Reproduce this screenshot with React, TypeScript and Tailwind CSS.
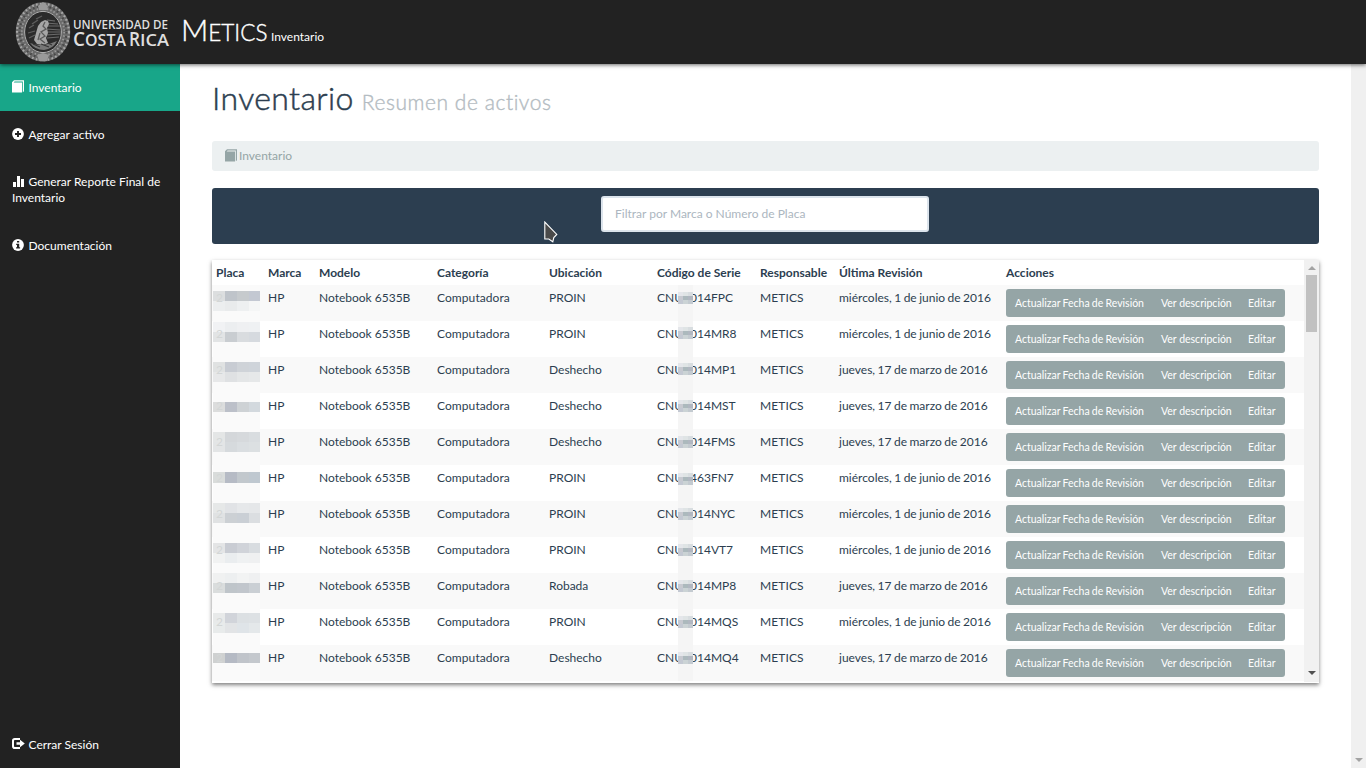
import type { ReactNode } from "react";

type Band = [number, number, string, string, string, string];

interface Asset {
  suffix: string;
  location: string;
  date: string;
  bands: Band[];
  my: number;
}

const JUNE = "miércoles, 1 de junio de 2016";
const MARCH = "jueves, 17 de marzo de 2016";

const assets: Asset[] = [
  { suffix: "014FPC", location: "PROIN", date: JUNE, my: 7, bands: [[6, 10, "#dcdedf", "#bfc4ca", "#c6cacd", "#c3c8d2"], [16, 10, "#eceeef", "#e9ebec", "#eef0f1", "#f5f6f6"]] },
  { suffix: "014MR8", location: "PROIN", date: JUNE, my: 6, bands: [[1, 10, "#f1f2f4", "#eceef0", "#eff0f2", "#eff1f3"], [11, 10, "#e2e4e5", "#c9cdd1", "#d9dcdf", "#d6dadf"]] },
  { suffix: "014MP1", location: "Deshecho", date: MARCH, my: 6, bands: [[5, 10, "#e0e2e2", "#c8ccd3", "#cfd3d8", "#cfd4da"], [15, 10, "#e7e8e9", "#dfe1e3", "#e4e6e7", "#e6e8e9"]] },
  { suffix: "014MST", location: "Deshecho", date: MARCH, my: 7, bands: [[9, 10, "#dcdddd", "#bcc0c9", "#ced2d5", "#d3d9de"]] },
  { suffix: "014FMS", location: "Deshecho", date: MARCH, my: 7, bands: [[3, 10, "#e4e6e6", "#d4d7da", "#d6d9dc", "#d9dde0"], [13, 10, "#e3e5e6", "#d6dadd", "#dadee1", "#dce0e2"]] },
  { suffix: "463FN7", location: "PROIN", date: JUNE, my: 8, bands: [[7, 11, "#d9dcdb", "#b6bbc5", "#c2c8cd", "#bfc8d0"]] },
  { suffix: "014NYC", location: "PROIN", date: JUNE, my: 7, bands: [[2, 10, "#e6e8e8", "#e1e3e6", "#e6e8ea", "#e5e7e9"], [12, 10, "#e0e2e3", "#ccd0d4", "#cacfd5", "#dbdee1"]] },
  { suffix: "014VT7", location: "PROIN", date: JUNE, my: 7, bands: [[6, 10, "#e4e5e6", "#c9ccd3", "#d0d3d9", "#d8dce0"], [16, 10, "#f1f2f2", "#eaedef", "#eff1f2", "#eff0f1"]] },
  { suffix: "014MP8", location: "Robada", date: MARCH, my: 7, bands: [[0, 10, "#f0f1f1", "#edeff0", "#f2f3f3", "#eff0f1"], [10, 10, "#dadddd", "#bfc5ca", "#c1c6cc", "#cacfd4"]] },
  { suffix: "014MQS", location: "PROIN", date: JUNE, my: 7, bands: [[4, 10, "#e8eaea", "#d1d4da", "#dce0e3", "#dde1e4"], [14, 10, "#e8ebeb", "#e2e4e6", "#dfe4e8", "#e4e8ea"]] },
  { suffix: "014MQ4", location: "Deshecho", date: MARCH, my: 7, bands: [[8, 10, "#cfd1d1", "#b5bac4", "#c0c4ca", "#c4c8cd"]] },
];

const headings = ["Placa", "Marca", "Modelo", "Categoría", "Ubicación", "Código de Serie", "Responsable", "Última Revisión", "Acciones"];

const cols = "grid grid-cols-[52px_51px_118px_112px_108px_103px_79px_167px_302px]";

const BookIcon = ({ className = "" }: { className?: string }) => (
  <svg className={className} width="12" height="13" viewBox="0 0 12 13">
    <path d="M0 2.3 2 .2h10v11l-1.2 1V1.4H2.6l-.9 1H10v10H0z" fill="currentColor" />
  </svg>
);
const PlusIcon = () => (
  <svg width="12" height="12" viewBox="0 0 12 12">
    <circle cx="6" cy="6" r="5.9" fill="#fff" />
    <path d="M6 3v6M3 6h6" stroke="#222" strokeWidth="1.9" />
  </svg>
);
const StatsIcon = () => (
  <svg width="12" height="12" viewBox="0 0 12 12" fill="#fff">
    <path d="M1 7h3v5H1zM5 1h3v11H5zM9 4h3v8H9z" />
  </svg>
);
const InfoIcon = () => (
  <svg width="12" height="12" viewBox="0 0 12 12">
    <circle cx="6" cy="6" r="5.9" fill="#fff" />
    <path d="M5 2h2.2v1.6H5zM4.2 4.7h3v3.5h.9v1.3H4.1V8.2H5V6h-.8z" fill="#222" />
  </svg>
);
const LogoutIcon = () => (
  <svg width="13" height="12" viewBox="0 0 13 12">
    <path d="M8 1H2.8Q1 1 1 2.8v5.4Q1 10 2.8 10H8" fill="none" stroke="#fff" strokeWidth="2" />
    <path d="M4.5 4.2H8V1.8l4.8 3.7L8 9.2V6.8H4.5z" fill="#fff" />
  </svg>
);

const Seal = () => (
  <svg width="56" height="62" viewBox="0 0 56 62" className="shrink-0">
    <ellipse cx="28" cy="32" rx="23" ry="25.4" fill="none" stroke="#6a6a6a" strokeWidth="8.6" />
    <ellipse cx="28" cy="32" rx="25.9" ry="28.2" fill="none" stroke="#a8a8a8" strokeWidth="2.2" strokeDasharray="1.7 2.3" />
    <ellipse cx="28" cy="32" rx="23.4" ry="25.8" fill="none" stroke="#484848" strokeWidth="2.2" strokeDasharray="1.6 2.6" />
    <ellipse cx="28" cy="32" rx="21.2" ry="23.4" fill="none" stroke="#9a9a9a" strokeWidth="1.8" strokeDasharray="1.4 2.1" />
    <ellipse cx="28" cy="32" rx="18.4" ry="20.6" fill="#2b2b2b" stroke="#b4b4b4" strokeWidth="1" />
    <path d="M23 6l5-4 5 4-1 4h-8zM22 55l6-2 6 2-2 6h-8z" fill="#999" />
    <path d="M32 20l8 1M31 23l12 1M32 26l13 0M31 29l14 1M32 32l14 0M31 35l15-1M32 38l12-1" stroke="#6b6b6b" strokeWidth="1.1" />
    <path d="M30 20l3 1 1 3-2 4 1 5-2 5 2 5-5 2-6-1-3-4 2-7 2-7 3-4z" fill="#a6a6a6" />
    <path d="M30 22l-2 4 3 3-5 3 4 4-5 3 5 4M23 40l2-7" stroke="#5b5b5b" strokeWidth="1.3" fill="none" />
    <path d="M14 28l5-3M13 33l7-2M14 38l6-3M17 24l6-4M21 19l6-3" stroke="#5e5e5e" strokeWidth="1.3" />
    <path d="M15 43q11 5 27-2-4 8-13 9-9 0-14-7" fill="#777" />
    <path d="M18 44l7 3M26 44l8 3M33 43l4 2" stroke="#353535" strokeWidth="1.2" />
  </svg>
);

function NavItem({ icon, children, active = false }: { icon: ReactNode; children: ReactNode; active?: boolean }) {
  return (
    <a className={`block px-3 pt-4 pb-[15px] leading-4 text-white ${active ? "bg-[#18a689]" : ""}`}>
      <span className="mr-[3.5px] -mt-1 inline-block h-3 w-[13px] align-[-1px]">{icon}</span>
      {children}
    </a>
  );
}

function PlateMosaic({ bands }: { bands: Band[] }) {
  return (
    <svg className="absolute left-px top-0" width="47" height="36" shapeRendering="crispEdges">
      <rect width="47" height="36" fill="#fafafa" />
      {bands.map((b) =>
        [2, 3, 4, 5].map((i) => (
          <rect key={`${b[0]}-${i}`} x={(i - 2) * 12} y={b[0]} width="12" height={b[1]} fill={b[i] as string} />
        )),
      )}
    </svg>
  );
}

function SerialMosaic({ top }: { top: number }) {
  const shades = ["#e4e6ea", "#dfe4e5", "#d8dde0", "#c7c9d0", "#acb9bd", "#b1b7c1", "#c3c8d2", "#cbd3d5", "#c3cad0"];
  return (
    <svg className="absolute left-[25px] top-0" width="15" height="36" shapeRendering="crispEdges">
      <rect width="15" height="36" fill="#f5f5f5" />
      {shades.map((c, i) => (
        <rect key={i} x={(i % 3) * 5} y={top + Math.floor(i / 3) * 4} width="5" height="4" fill={c} />
      ))}
    </svg>
  );
}

const Arrow = ({ up = false, color }: { up?: boolean; color: string }) => (
  <svg width="8" height="4" viewBox="0 0 8 4" className="block">
    <path d={up ? "M0 4h8L4 0z" : "M0 0h8L4 4z"} fill={color} />
  </svg>
);

export default function App() {
  return (
    <div className="relative flex h-[768px] w-[1366px] flex-col overflow-hidden bg-white font-['Lato',sans-serif] text-[12px] text-[#2c3e50]">
      <header className="relative z-10 flex h-16 shrink-0 items-start bg-[#222] text-white shadow-[0_1px_4px_rgba(0,0,0,0.6)]">
        <div className="flex w-[181px] pl-[15px]">
          <Seal />
          <svg className="ml-[2px] mt-[10px] shrink-0 overflow-visible" width="100" height="44" fill="#dedede" fontFamily="'Open Sans', sans-serif" fontWeight="600">
            <text x="0" y="18.5" fontSize="12.5" textLength="95" lengthAdjust="spacingAndGlyphs">UNIVERSIDAD DE</text>
            <text x="0" y="35.5" fontSize="20.5" textLength="12" lengthAdjust="spacingAndGlyphs">C</text>
            <text x="12" y="35.5" fontSize="17" textLength="41" lengthAdjust="spacingAndGlyphs">OSTA</text>
            <text x="56" y="35.5" fontSize="20.5" textLength="11" lengthAdjust="spacingAndGlyphs">R</text>
            <text x="67" y="35.5" fontSize="17" textLength="29" lengthAdjust="spacingAndGlyphs">ICA</text>
          </svg>
        </div>
        <div className="flex items-baseline whitespace-nowrap pt-[11px] leading-[36px]">
          <span className="w-[90px] text-[30px] font-light [-webkit-text-stroke:0.4px_#fff]">
            M<span className="text-[22.5px]">ETICS</span>
          </span>
          <span>Inventario</span>
        </div>
      </header>

      <div className="flex min-h-0 flex-1">
        <nav className="flex w-[180px] shrink-0 flex-col bg-[#222]">
          <NavItem active icon={<BookIcon className="-mt-px" />}>Inventario</NavItem>
          <NavItem icon={<PlusIcon />}>Agregar activo</NavItem>
          <div className="pb-px">
            <NavItem icon={<StatsIcon />}>Generar Reporte Final de Inventario</NavItem>
          </div>
          <NavItem icon={<InfoIcon />}>Documentación</NavItem>
          <div className="mt-auto">
            <NavItem icon={<LogoutIcon />}>Cerrar Sesión</NavItem>
          </div>
        </nav>

        <main className="flex flex-1 flex-col px-8">
          <h1 className="mt-[14px] flex h-10 items-baseline gap-2 whitespace-nowrap text-[32px] font-light leading-[40px] tracking-[0.4px] [-webkit-text-stroke:0.5px_#2c3e50]">
            <span>Inventario</span>
            <small className="text-[21px] tracking-[0.55px] text-[#b4bcc2] [-webkit-text-stroke:0.4px_#b4bcc2]">Resumen de activos</small>
          </h1>
          <div className="mt-[23px] flex h-[30px] shrink-0 items-center rounded-[3px] bg-[#ecf0f1] pl-[13px] text-[#95a5a6]">
            <BookIcon className="mr-[2px] -mt-px" />
            Inventario
          </div>
          <div className="relative mt-[17px] flex h-14 shrink-0 justify-center rounded-[3px] bg-[#2c3e50] pt-2">
            <input
              className="-ml-px h-9 w-[328px] rounded-[3px] border-2 border-[#dce4ec] bg-white px-3 pb-[2px] text-[12px] outline-none placeholder:text-[#acb6c0]"
              placeholder="Filtrar por Marca o Número de Placa"
            />
            <svg className="absolute left-[332px] top-[33px]" width="14" height="22" viewBox="0 0 14 22">
              <path d="M.8 1v17h4l4 2.8 1-4.2 3-3.2z" fill="#4a4a4a" stroke="#fff" strokeWidth="1.1" />
            </svg>
          </div>

          <section className="mt-4 flex h-[423px] shrink-0 shadow-[0_1.5px_4px_rgba(0,0,0,0.5)]">
            <div className="w-[1092px] overflow-hidden">
              <div className={`${cols} h-[25px] pt-1 font-bold leading-[18px]`}>
                {headings.map((h) => (
                  <div key={h} className="whitespace-nowrap pl-1">{h}</div>
                ))}
              </div>
              {assets.map((a) => (
                <div key={a.suffix} className={`${cols} h-9 leading-[18px] odd:bg-white even:bg-[#f9f9f9] *:whitespace-nowrap *:pl-1 *:pt-1`}>
                  <div className="relative">
                    <PlateMosaic bands={a.bands} />
                    <span className="relative text-[#d3d6d6]">2</span>
                  </div>
                  <div>HP</div>
                  <div>Notebook 6535B</div>
                  <div className="tracking-[0.08px]">Computadora</div>
                  <div>{a.location}</div>
                  <div className="relative">
                    <span>CNU</span>
                    <span className="inline-block w-[7px]" />
                    <span>{a.suffix}</span>
                    <SerialMosaic top={a.my} />
                  </div>
                  <div className="tracking-[0.1px]">METICS</div>
                  <div className="[word-spacing:-0.6px]">{a.date}</div>
                  <div>
                    <div className="flex h-7 w-[279px] items-center rounded-[3px] bg-[#95a5a6] text-[10.5px] text-white">
                      <span className="w-[146px] pl-[9px] [word-spacing:-0.5px]">Actualizar Fecha de Revisión</span>
                      <span className="w-[87px] pl-[9px]">Ver descripción</span>
                      <span className="pl-[9px] tracking-[0.1px]">Editar</span>
                    </div>
                  </div>
                </div>
              ))}
            </div>
            <div className="mb-px flex w-[15px] flex-col items-center bg-[#f1f1f1] pt-[6px] pb-[7px]">
              <Arrow up color="#a3a3a3" />
              <div className="mt-[5px] h-[57px] w-[11px] bg-[#c1c1c1]" />
              <div className="mt-auto"><Arrow color="#505050" /></div>
            </div>
          </section>
        </main>
        <div className="flex w-[15px] flex-col items-center justify-end bg-[#f0f0f0] pb-[6px]">
          <Arrow color="#a3a3a3" />
        </div>
      </div>
    </div>
  );
}
